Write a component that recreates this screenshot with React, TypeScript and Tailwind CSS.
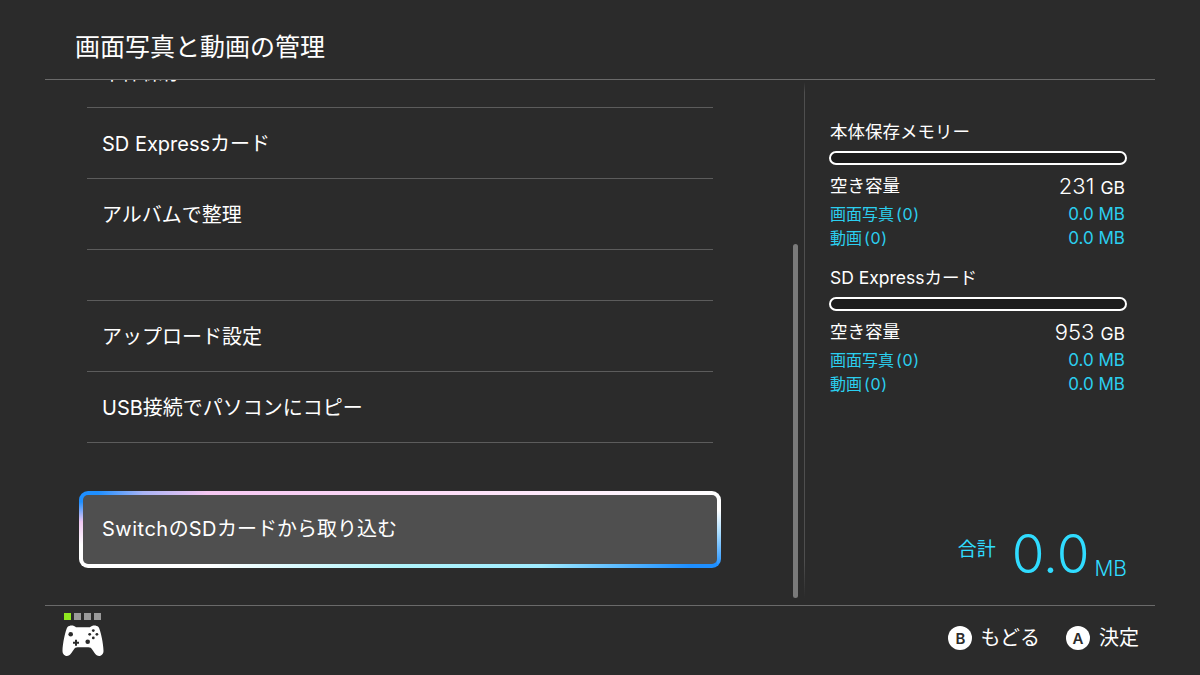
const font = { fontFamily: 'Inter, "Noto Sans CJK JP", "Noto Sans", sans-serif' };

function Row({ label, h = "h-[71px]" }: { label?: string; h?: string }) {
  return (
    <div className={`${h} shrink-0 flex items-center border-b border-[#5c5c5c] pl-[15px] pt-[2px] text-[20px] text-white leading-none`}>
      {label}
    </div>
  );
}

function Storage({ name, free }: { name: string; free: string }) {
  return (
    <div className="flex flex-col">
      <div className="h-[24px] pl-[1px] flex items-center text-[17.5px] text-white leading-none">{name}</div>
      <div className="mt-[7px] h-[14px] rounded-full border-2 border-white bg-[#1c1c1c]" />
      <div className="mt-[9px] h-[24px] pl-[1px] flex items-center justify-between text-white leading-none">
        <span className="text-[17.5px]">空き容量</span>
        <span className="text-[22px] font-light pr-[2px]">
          {free} <span className="text-[17.5px] font-normal">GB</span>
        </span>
      </div>
      <div className="mt-[4px] h-[24px] pl-[1px] flex items-center justify-between text-[16px] text-[#2bcfef] leading-none">
        <span>画面写真<span className="ml-[2px] tracking-[0.7px]">(0)</span></span>
        <span className="pr-[2px] text-[17px]">0.0 MB</span>
      </div>
      <div className="h-[24px] pl-[1px] flex items-center justify-between text-[16px] text-[#2bcfef] leading-none">
        <span>動画<span className="ml-[2px] tracking-[0.7px]">(0)</span></span>
        <span className="pr-[2px] text-[17px]">0.0 MB</span>
      </div>
    </div>
  );
}

function Pad() {
  return (
    <svg width="42" height="32" viewBox="0 0 42 32" className="block">
      <path
        fill="#fff"
        d="M5.5 2 C7.5 0.3 11.5 -0.2 14 2.2 H28 C30.5 -0.2 34.5 0.3 36.5 2 C38.5 5 41.5 19 41.5 26 C41.5 29.5 39 31 37 31 C34.5 31 32.5 28 30.5 25 C29.5 23 28 22.3 26.5 22.3 H15.5 C14 22.3 12.5 23 11.5 25 C9.5 28 7.5 31 5 31 C3 31 0.5 29.5 0.5 26 C0.5 19 3.5 5 5.5 2 Z"
      />
      <circle cx="8.7" cy="9.3" r="2.3" fill="#2b2b2b" />
      <path d="M13 14.7 h2 v2 h2 v2 h-2 v2 h-2 v-2 h-2 v-2 h2 z" fill="#2b2b2b" />
      <circle cx="25.7" cy="16.7" r="2.3" fill="#2b2b2b" />
      <circle cx="31.3" cy="5.6" r="1.4" fill="#2b2b2b" />
      <circle cx="27.7" cy="9.3" r="1.4" fill="#2b2b2b" />
      <circle cx="34.9" cy="9.3" r="1.4" fill="#2b2b2b" />
      <circle cx="31.3" cy="12.9" r="1.4" fill="#2b2b2b" />
    </svg>
  );
}

export default function App() {
  return (
    <div style={font} className="w-[1200px] h-[675px] bg-[#2b2b2b] flex flex-col overflow-hidden">
      <header className="h-[80px] shrink-0 mx-[45px] pl-[30px] pb-[3px] flex items-center border-b border-[#6a6a6a]">
        <h1 className="text-[25px] text-white leading-none font-normal mt-[18px]">画面写真と動画の管理</h1>
      </header>

      <main className="h-[525px] shrink-0 flex">
        <div className="w-[748px] pl-[87px] overflow-hidden flex flex-col">
          <div className="w-[626px] -mt-[43px] flex flex-col">
            <Row label="本体保存メモリー" />
            <Row label="SD Expressカード" />
            <Row label="アルバムで整理" />
            <Row h="h-[51px]" />
            <Row label="アップロード設定" />
            <Row label="USB接続でパソコンにコピー" />
          </div>
          <div className="mt-[48px] -ml-[8px] w-[642px] h-[77px] rounded-[9px] p-[4px] [background:linear-gradient(90deg,#1e8fff_0%,#1e8fff_3%,#a9b4f5_10%,#f6c8f2_20%,#fde0f8_60%,#ffffff_100%)_top/100%_4px_no-repeat,linear-gradient(90deg,#ffffff_0%,#ffffff_20%,#b0f4fb_50%,#a0ecff_72%,#1e8fff_95%)_bottom/100%_4px_no-repeat,linear-gradient(180deg,#1e8fff_0%,#1e8fff_14%,#f0c8f2_40%,#ffffff_70%)_left/4px_100%_no-repeat,linear-gradient(180deg,#ffffff_0%,#ffffff_25%,#a8dcff_55%,#1e8fff_100%)_right/4px_100%_no-repeat,linear-gradient(#1e8fff,#1e8fff)_top_left/12px_12px_no-repeat,linear-gradient(#ffffff,#ffffff)_top_right/12px_12px_no-repeat,linear-gradient(#ffffff,#ffffff)_bottom_left/12px_12px_no-repeat,linear-gradient(#1e8fff,#1e8fff)_bottom_right/12px_12px_no-repeat]">
            <div className="w-full h-full rounded-[5px] bg-[#4f4f4f] flex items-center pl-[19px] pb-[2px] text-[20px] text-white leading-none">
              <span className="tracking-[0.5px]">Switch</span>の<span className="tracking-[0.5px]">SD</span>カードから取り込む
            </div>
          </div>
        </div>

        <div className="w-[5px] ml-[45px] pt-[164px] pb-[7px] shrink-0 flex flex-col">
          <div className="flex-1 w-[5px] rounded-full bg-[#7a7a7a]" />
        </div>
        <div className="w-px ml-[6px] mt-[2px] mb-[7px] shrink-0 bg-[linear-gradient(to_bottom,transparent_0%,#4f4f4f_2%,#4f4f4f_93%,transparent_100%)]" />

        <div className="w-[298px] ml-[24px] pt-[40px] pb-[24px] flex flex-col">
          <Storage name="本体保存メモリー" free="231" />
          <div className="h-[16px]" />
          <Storage name="SD Expressカード" free="953" />
          <div className="mt-auto flex items-end justify-end text-[#30dcff] leading-none">
            <span className="text-[19px] mb-[22px] mr-[16px]">合計</span>
            <span className="text-[53px] font-light">0.0</span>
            <span className="text-[21px] font-light ml-[5px] mb-[2px]">MB</span>
          </div>
        </div>
      </main>

      <footer className="flex-1 mx-[45px] border-t border-[#6a6a6a] flex items-start justify-between">
        <div className="pl-[17px] pt-[7px] flex flex-col">
          <div className="flex gap-[3px] ml-[2px]">
            <span className="w-[7px] h-[7px] bg-[#8fe81f]" />
            <span className="w-[7px] h-[7px] bg-[#9a9a9a]" />
            <span className="w-[7px] h-[7px] bg-[#9a9a9a]" />
            <span className="w-[7px] h-[7px] bg-[#9a9a9a]" />
          </div>
          <div className="mt-[5px]"><Pad /></div>
        </div>
        <div className="flex items-center h-[64px] pr-[16px] text-white text-[20px] leading-none">
          <span className="w-[24px] h-[24px] rounded-full bg-white text-[#2b2b2b] text-[15px] font-semibold flex items-center justify-center">B</span>
          <span className="ml-[8px]">もどる</span>
          <span className="ml-[26px] w-[24px] h-[24px] rounded-full bg-white text-[#2b2b2b] text-[15px] font-semibold flex items-center justify-center">A</span>
          <span className="ml-[9px]">決定</span>
        </div>
      </footer>
    </div>
  );
}
